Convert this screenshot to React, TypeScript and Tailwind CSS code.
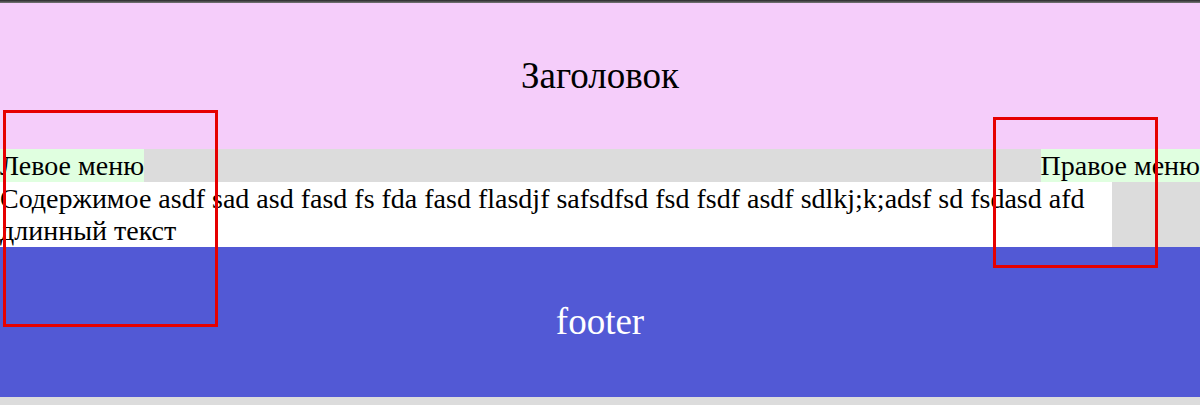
const App = () => {
  return (
    <div className="relative w-[1200px] h-[405px] bg-[#dcdcdc] font-['Liberation_Serif',serif] text-black overflow-hidden">
      <div className="h-[3px] bg-gradient-to-b from-[#2a2a2a] to-[#777]" />
      <header className="h-[146px] bg-[#f5cdfa] flex items-center justify-center">
        <h1 className="text-[37px] leading-none pb-[2px]">Заголовок</h1>
      </header>
      <div className="h-[33px] flex justify-between items-stretch">
        <div className="bg-[#e0ffe0] text-[28px] leading-[33px]">Левое меню</div>
        <div className="bg-[#e0ffe0] text-[28px] leading-[33px]">Правое меню</div>
      </div>
      <main className="w-[1112px] h-[65px] bg-white text-[28px] leading-[32px] pt-[1px]">
        Содержимое asdf sad asd fasd fs fda fasd flasdjf safsdfsd fsd fsdf asdf sdlkj;k;adsf sd fsdasd afd длинный текст
      </main>
      <footer className="h-[150px] bg-[#5259d5] flex items-center justify-center">
        <p className="text-[37px] leading-none text-white pb-[1px]">footer</p>
      </footer>

      <div className="absolute left-[3px] top-[110px] w-[215px] h-[217px] border-[3px] border-[#e60000]" />
      <div className="absolute left-[993px] top-[117px] w-[165px] h-[151px] border-[3px] border-[#e60000]" />
    </div>
  );
};

export default App;
